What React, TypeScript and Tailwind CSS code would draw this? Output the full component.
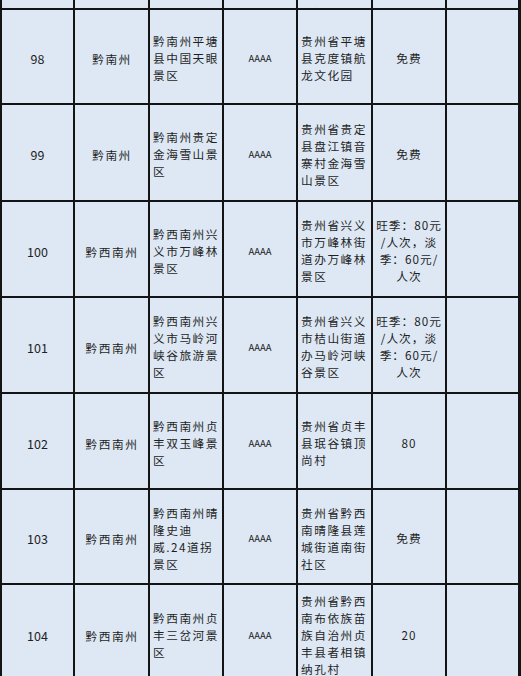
import React from "react";

// Rows of the scenic-area table (cut from a longer list)
const rows = [
  {
    no: "98",
    region: "黔南州",
    name: ["黔南州平塘", "县中国天眼", "景区"],
    level: "AAAA",
    address: ["贵州省平塘", "县克度镇航", "龙文化园"],
    price: ["免费"],
  },
  {
    no: "99",
    region: "黔南州",
    name: ["黔南州贵定", "金海雪山景", "区"],
    level: "AAAA",
    address: ["贵州省贵定", "县盘江镇音", "寨村金海雪", "山景区"],
    price: ["免费"],
  },
  {
    no: "100",
    region: "黔西南州",
    name: ["黔西南州兴", "义市万峰林", "景区"],
    level: "AAAA",
    address: ["贵州省兴义", "市万峰林街", "道办万峰林", "景区"],
    price: ["旺季：80元", "/人次，淡", "季：60元/", "人次"],
  },
  {
    no: "101",
    region: "黔西南州",
    name: ["黔西南州兴", "义市马岭河", "峡谷旅游景", "区"],
    level: "AAAA",
    address: ["贵州省兴义", "市桔山街道", "办马岭河峡", "谷景区"],
    price: ["旺季：80元", "/人次，淡", "季：60元/", "人次"],
  },
  {
    no: "102",
    region: "黔西南州",
    name: ["黔西南州贞", "丰双玉峰景", "区"],
    level: "AAAA",
    address: ["贵州省贞丰", "县珉谷镇顶", "尚村"],
    price: ["80"],
  },
  {
    no: "103",
    region: "黔西南州",
    name: ["黔西南州晴", "隆史迪", "威.24道拐", "景区"],
    level: "AAAA",
    address: ["贵州省黔西", "南晴隆县莲", "城街道南街", "社区"],
    price: ["免费"],
  },
  {
    no: "104",
    region: "黔西南州",
    name: ["黔西南州贞", "丰三岔河景", "区"],
    level: "AAAA",
    address: ["贵州省黔西", "南布依族苗", "族自治州贞", "丰县者相镇", "纳孔村"],
    price: ["20"],
  },
];

const cell = "bg-[#dde8f4] flex items-center overflow-hidden";

const Lines = ({ lines }: { lines: string[] }) => (
  <div>
    {lines.map((l, i) => (
      <div key={i} className="whitespace-nowrap">
        {l}
      </div>
    ))}
  </div>
);

export default function App() {
  return (
    <div
      className="w-[521px] h-[676px] overflow-hidden bg-white text-[#1f1f1f] text-[11.7px] leading-[17px] tracking-[1.5px]"
      style={{ fontFamily: '"Noto Sans CJK SC", "Noto Sans", sans-serif' }}
    >
      <div className="grid grid-cols-[71px_73px_72px_72px_73px_72px_71px] grid-rows-[8px_93px_95px_94px_94px_94px_93px_96px] gap-[2px] bg-[#141414] pl-[2px] pr-[3px]">
        {/* tail of the previous row */}
        <div className={cell} />
        <div className={cell} />
        <div className={cell} />
        <div className={cell} />
        <div className="bg-[#dde8f4] overflow-hidden flex items-end pl-[3px]">
          <div className="whitespace-nowrap -mb-[13px]">龙门飞园</div>
        </div>
        <div className={cell} />
        <div className={cell} />

        {rows.map((r) => (
          <React.Fragment key={r.no}>
            <div className={`${cell} justify-center pt-[4px] text-[12.5px] tracking-normal`}>{r.no}</div>
            <div className={`${cell} justify-center pt-[4px] pl-[1px]`}>{r.region}</div>
            <div className={`${cell} pl-[3px] pt-[2px]`}>
              <Lines lines={r.name} />
            </div>
            <div className={`${cell} justify-center pt-[4px] text-[9.5px] tracking-normal`}>{r.level}</div>
            <div className={`${cell} pl-[3px] pt-[2px]`}>
              <Lines lines={r.address} />
            </div>
            <div className={`${cell} justify-center text-center pt-[2px] tracking-[1px]`}>
              <Lines lines={r.price} />
            </div>
            <div className={cell} />
          </React.Fragment>
        ))}
      </div>
    </div>
  );
}
